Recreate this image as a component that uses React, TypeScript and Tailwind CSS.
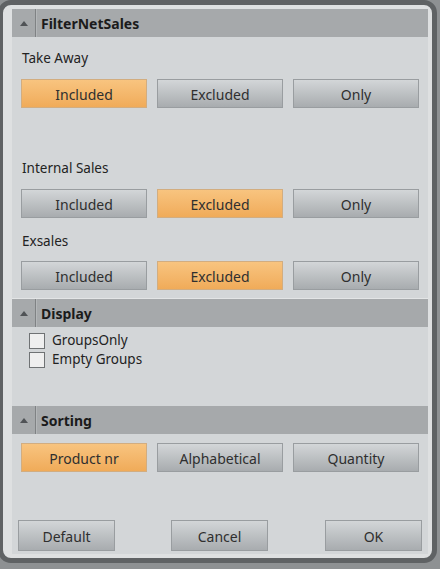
import React from "react";

const font = { fontFamily: '"Noto Sans", "Open Sans", Arial, sans-serif' };

function Btn({ label, on, w = "w-[126px]", h = "h-[29px]" }: { label: string; on?: boolean; w?: string; h?: string }) {
  return (
    <div
      className={
        `${w} ${h} flex items-center justify-center pt-[2px] text-[14px] text-[#2f2f2f] border ` +
        (on
          ? "border-[#d2ad80] bg-gradient-to-b from-[#f8c47f] to-[#f0ab59]"
          : "border-[#999da0] bg-gradient-to-b from-[#d3d6d8] to-[#a8acaf]")
      }
    >
      {label}
    </div>
  );
}

function Header({ title }: { title: string }) {
  return (
    <div className="h-[28px] bg-[#a6a9ab] flex items-stretch">
      <div className="w-[23px] flex items-center justify-center">
        <svg width="8" height="5" viewBox="0 0 8 5">
          <path d="M0 5 L4 0 L8 5 Z" fill="#505356" />
        </svg>
      </div>
      <div className="w-px bg-[#7f8284]" />
      <div className="w-px bg-[#b4b7b9]" />
      <div className="pl-[4px] flex items-center text-[14px] font-bold text-[#1b1b1b]">{title}</div>
    </div>
  );
}

function Row({ sel }: { sel: number }) {
  return (
    <div className="flex gap-[10px] px-[9px]">
      <Btn label="Included" on={sel === 0} />
      <Btn label="Excluded" on={sel === 1} />
      <Btn label="Only" on={sel === 2} />
    </div>
  );
}

function Check({ label }: { label: string }) {
  return (
    <div className="flex items-center h-[19px] pl-[17px]">
      <div className="w-[16px] h-[16px] border border-[#6f7274] bg-[#efefef]" />
      <span className="ml-[7px] text-[13.5px] text-[#222]">{label}</span>
    </div>
  );
}

export default function App() {
  return (
    <div className="relative w-[440px] h-[569px] overflow-hidden bg-[#8e9193]" style={font}>
      <div className="absolute left-[-2px] top-0 w-[439px] h-[563px] rounded-[13px] border-[5px] border-[#5f6264] bg-[#dee0e1] pt-[4px] pr-[4px] pl-[9px] pb-[4px]">
        <div className="h-full bg-[#d3d6d8] flex flex-col">
          <Header title="FilterNetSales" />
          <div className="mt-[11px] h-[20px] pl-[10px] flex items-center text-[13.5px] text-[#222]">Take Away</div>
          <div className="mt-[11px]"><Row sel={0} /></div>
          <div className="mt-[50px] h-[20px] pl-[10px] flex items-center text-[13.5px] text-[#222]">Internal Sales</div>
          <div className="mt-[11px]"><Row sel={1} /></div>
          <div className="mt-[13px] h-[20px] pl-[10px] flex items-center text-[13.5px] text-[#222]">Exsales</div>
          <div className="mt-[10px]"><Row sel={1} /></div>
          <div className="mt-[8px] h-px bg-[#e3e5e6]" />
          <Header title="Display" />
          <div className="mt-[4px]">
            <Check label="GroupsOnly" />
            <Check label="Empty Groups" />
          </div>
          <div className="mt-[37px]">
            <Header title="Sorting" />
          </div>
          <div className="mt-[9px] flex gap-[10px] px-[9px]">
            <Btn label="Product nr" on />
            <Btn label="Alphabetical" />
            <Btn label="Quantity" />
          </div>
          <div className="mt-[48px] flex px-[6px]">
            <Btn label="Default" w="w-[97px]" h="h-[31px]" />
            <div className="ml-[56px]"><Btn label="Cancel" w="w-[97px]" h="h-[31px]" /></div>
            <div className="ml-[57px]"><Btn label="OK" w="w-[97px]" h="h-[31px]" /></div>
          </div>
        </div>
      </div>
    </div>
  );
}
